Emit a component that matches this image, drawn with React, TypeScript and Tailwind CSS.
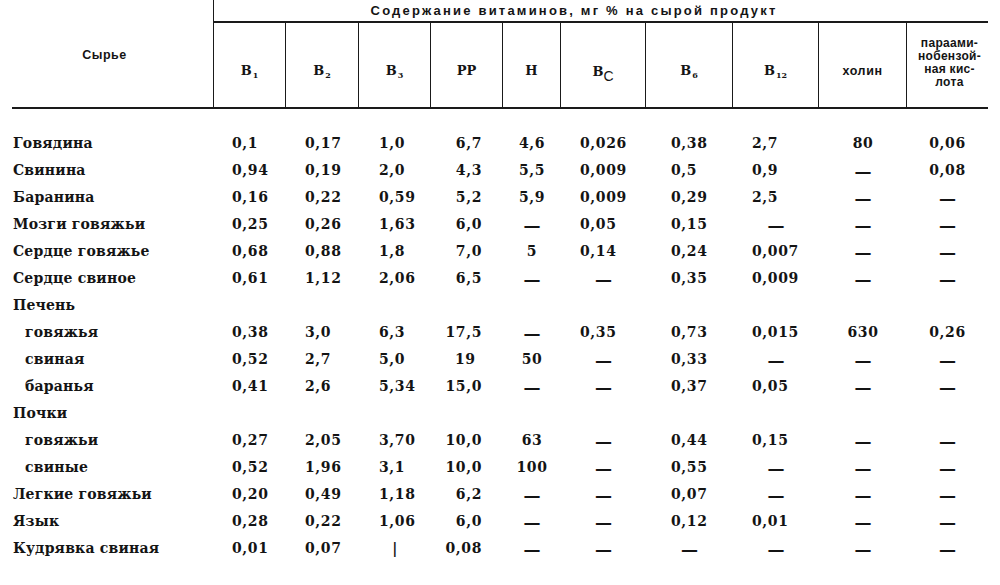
const serif = { fontFamily: '"DejaVu Serif", "Liberation Serif", serif' };

type Align = "l" | "r" | "c";
type Col = { w: string; align: Align; pad: string };

// body column alignment, measured from the scan
const cols: Col[] = [
  { w: "B1", align: "l", pad: "pl-[18px]" },
  { w: "B2", align: "l", pad: "pl-[19px]" },
  { w: "B3", align: "l", pad: "pl-[20px]" },
  { w: "PP", align: "r", pad: "pr-[21px]" },
  { w: "H", align: "c", pad: "" },
  { w: "BC", align: "l", pad: "pl-[19px]" },
  { w: "B6", align: "l", pad: "pl-[25px]" },
  { w: "B12", align: "l", pad: "pl-[19px]" },
  { w: "chol", align: "c", pad: "" },
  { w: "paba", align: "c", pad: "" },
];

type Row = { name: string; sub?: boolean; vals?: string[] };

const rows: Row[] = [
  { name: "Говядина", vals: ["0,1", "0,17", "1,0", "6,7", "4,6", "0,026", "0,38", "2,7", "80", "0,06"] },
  { name: "Свинина", vals: ["0,94", "0,19", "2,0", "4,3", "5,5", "0,009", "0,5", "0,9", "—", "0,08"] },
  { name: "Баранина", vals: ["0,16", "0,22", "0,59", "5,2", "5,9", "0,009", "0,29", "2,5", "—", "—"] },
  { name: "Мозги говяжьи", vals: ["0,25", "0,26", "1,63", "6,0", "—", "0,05", "0,15", "—", "—", "—"] },
  { name: "Сердце говяжье", vals: ["0,68", "0,88", "1,8", "7,0", "5", "0,14", "0,24", "0,007", "—", "—"] },
  { name: "Сердце свиное", vals: ["0,61", "1,12", "2,06", "6,5", "—", "—", "0,35", "0,009", "—", "—"] },
  { name: "Печень" },
  { name: "говяжья", sub: true, vals: ["0,38", "3,0", "6,3", "17,5", "—", "0,35", "0,73", "0,015", "630", "0,26"] },
  { name: "свиная", sub: true, vals: ["0,52", "2,7", "5,0", "19 ", "50", "—", "0,33", "—", "—", "—"] },
  { name: "баранья", sub: true, vals: ["0,41", "2,6", "5,34", "15,0", "—", "—", "0,37", "0,05", "—", "—"] },
  { name: "Почки" },
  { name: "говяжьи", sub: true, vals: ["0,27", "2,05", "3,70", "10,0", "63", "—", "0,44", "0,15", "—", "—"] },
  { name: "свиные", sub: true, vals: ["0,52", "1,96", "3,1", "10,0", "100", "—", "0,55", "—", "—", "—"] },
  { name: "Легкие говяжьи", vals: ["0,20", "0,49", "1,18", "6,2", "—", "—", "0,07", "—", "—", "—"] },
  { name: "Язык", vals: ["0,28", "0,22", "1,06", "6,0", "—", "—", "0,12", "0,01", "—", "—"] },
  { name: "Кудрявка свиная", vals: ["0,01", "0,07", "|", "0,08", "—", "—", "—", "—", "—", "—"] },
];

const grid =
  "grid grid-cols-[202px_72px_73px_72px_72px_58px_85px_87px_86px_88px_81px]";

function Cell({ v, col }: { v: string; col: Col }) {
  const isMark = v === "—" || v === "|";
  let cls = "flex items-center h-full ";
  if (isMark || col.align === "c") cls += "justify-center";
  else if (col.align === "r") cls += "justify-end " + col.pad;
  else cls += "justify-start " + col.pad;

  // "19" sits flush left in the PP column, like the 4-char values
  if (v === "19 ") cls = "flex items-center h-full justify-start pl-[24px]";

  return (
    <div className={cls}>
      {v === "—" ? (
        <span className="text-[17px] translate-y-[2px] font-bold">—</span>
      ) : (
        <span className="tracking-[0.6px]">{v.trim()}</span>
      )}
    </div>
  );
}

function HeadLabel({ b, s, big }: { b: string; s?: string; big?: boolean }) {
  return (
    <div className="flex items-center justify-center h-full pt-[12px] border-r-[1.5px] border-[#1a1a1a]">
      <span className="font-bold text-[13px]" style={serif}>
        {b}
        {s &&
          (big ? (
            <span
              className="relative top-[5px] font-normal text-[14px]"
              style={{ fontFamily: '"Liberation Sans", sans-serif' }}
            >
              {s}
            </span>
          ) : (
            <span className="relative top-[3px] text-[8px] ml-px">{s}</span>
          ))}
      </span>
    </div>
  );
}

export default function App() {
  return (
    <div className="w-[1000px] h-[585px] bg-white text-[#141414] overflow-hidden">
      <div className="ml-[12px] w-[976px]">
        {/* Header */}
        <div
          className={`${grid} grid-rows-[23px_84px] border-b-[2.5px] border-[#1a1a1a]`}
          style={{ fontFamily: '"Liberation Sans", Arial, sans-serif' }}
        >
          <div className="row-span-2 flex items-center justify-center border-r-[1.5px] border-[#1a1a1a]">
            <span className="font-bold text-[12.5px] tracking-[0.5px] ml-[-16px] mt-[4px]">Сырье</span>
          </div>
          <div className="col-span-10 flex items-center justify-center border-b-[2px] border-[#1a1a1a] pr-[54px]">
            <span className="font-bold text-[13px] tracking-[2.2px] pt-[1px]">
              Содержание витаминов, мг % на сырой продукт
            </span>
          </div>
          <HeadLabel b="B" s="1" />
          <HeadLabel b="B" s="2" />
          <HeadLabel b="B" s="3" />
          <HeadLabel b="PP" />
          <HeadLabel b="H" />
          <HeadLabel b="B" s="C" big />
          <HeadLabel b="B" s="6" />
          <HeadLabel b="B" s="12" />
          <div className="flex items-center justify-center h-full pt-[12px] border-r-[1.5px] border-[#1a1a1a]">
            <span className="font-bold text-[12.5px] tracking-[0.6px]">холин</span>
          </div>
          <div className="flex items-center justify-center h-full pb-[4px] pl-[4px]">
            <span className="font-bold text-[12px] leading-[13px] text-center tracking-[0.3px]">
              параами-
              <br />
              нобензой-
              <br />
              ная кис-
              <br />
              лота
            </span>
          </div>
        </div>

        {/* Body */}
        <div className="pt-[21px] text-[14px] font-bold" style={serif}>
          {rows.map((r, i) => (
            <div key={i} className={`${grid} h-[27px]`}>
              <div className={`flex items-center h-full ${r.sub ? "pl-[13px]" : "pl-px"}`}>
                <span className="tracking-[0.2px]">{r.name}</span>
              </div>
              {r.vals
                ? r.vals.map((v, j) => <Cell key={j} v={v} col={cols[j]} />)
                : null}
            </div>
          ))}
        </div>
      </div>
    </div>
  );
}
